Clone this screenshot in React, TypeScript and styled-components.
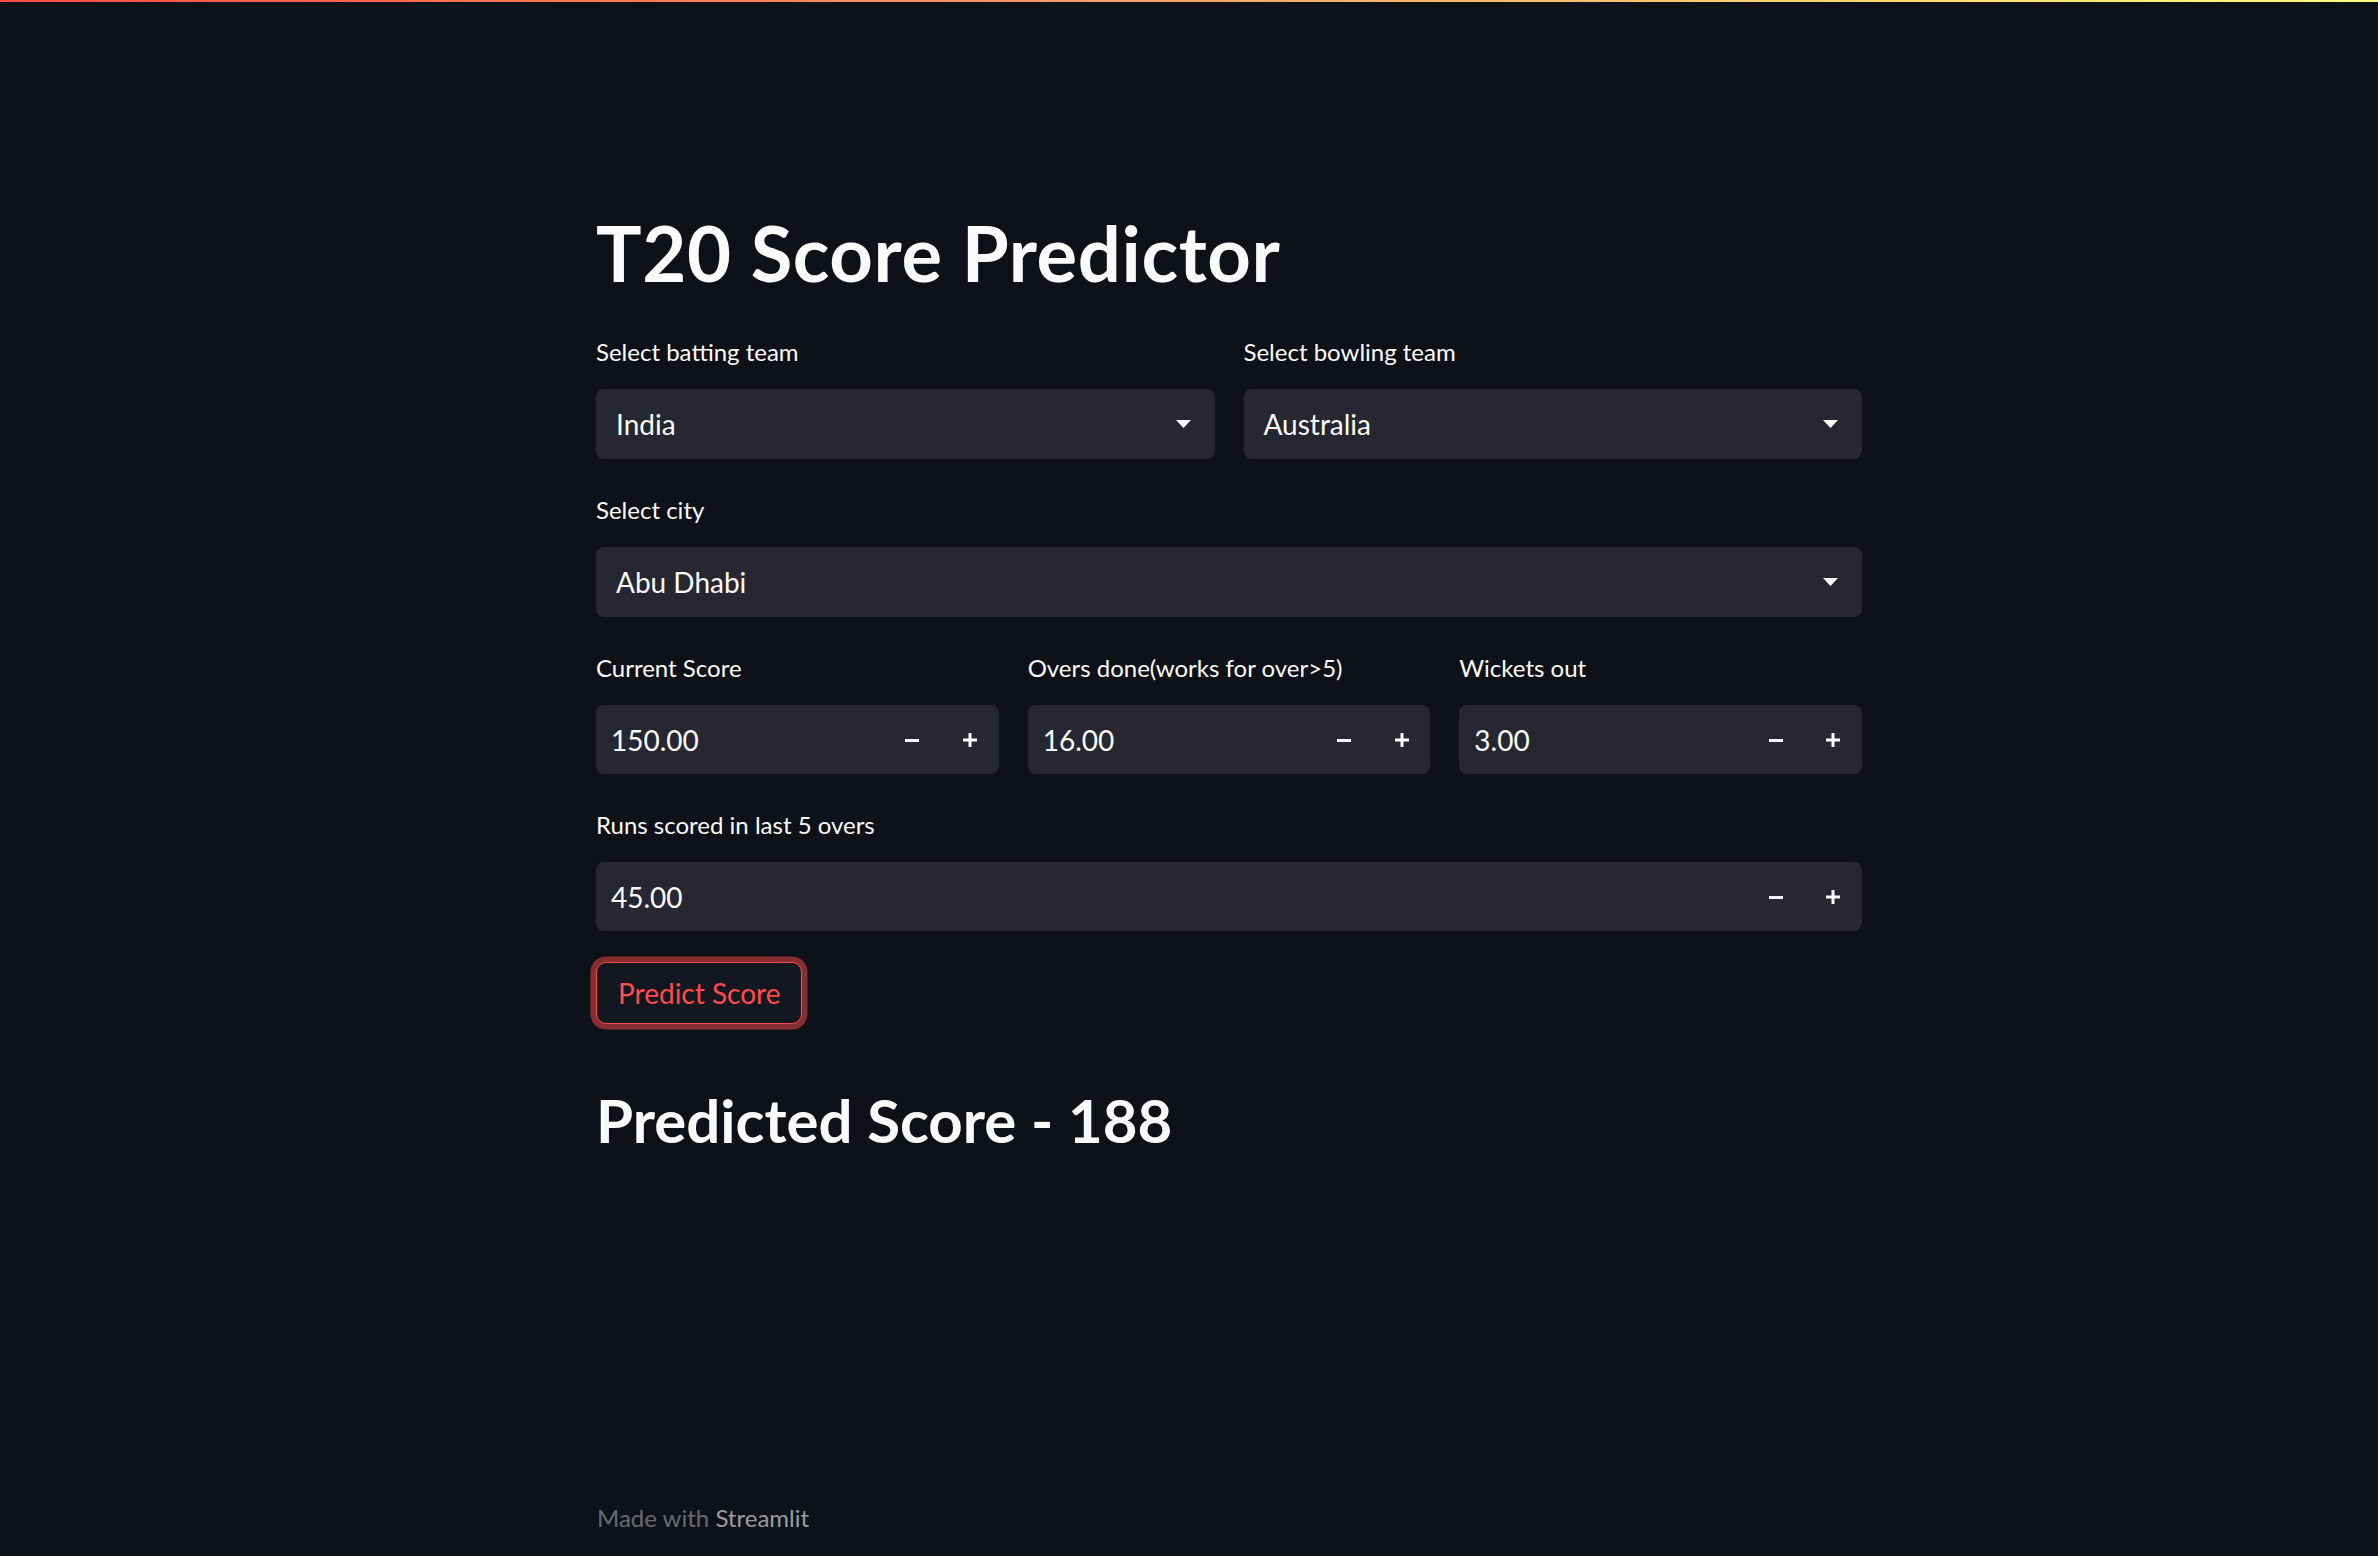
import React from "react";
import styled, { createGlobalStyle } from "styled-components";

const GlobalStyle = createGlobalStyle`
  html, body {
    margin: 0;
    padding: 0;
    background: #0e1117;
    color: #fafafa;
    font-family: Lato, "Open Sans", sans-serif;
  }
  * {
    box-sizing: border-box;
  }
`;

const battingTeam = "India";
const bowlingTeam = "Australia";
const city = "Abu Dhabi";

const App: React.FC = () => {
  return (
    <Page>
      <GlobalStyle />
      <Decoration />
      <Main>
        <Title>T20 Score Predictor</Title>

        <Form>
          <Columns $count={2}>
            <Field>
              <Label>Select batting team</Label>
              <SelectBox>
                <span>{battingTeam}</span>
                <Caret />
              </SelectBox>
            </Field>
            <Field>
              <Label>Select bowling team</Label>
              <SelectBox>
                <span>{bowlingTeam}</span>
                <Caret />
              </SelectBox>
            </Field>
          </Columns>

          <Field>
            <Label>Select city</Label>
            <SelectBox>
              <span>{city}</span>
              <Caret />
            </SelectBox>
          </Field>

          <Columns $count={3}>
            <NumberField label="Current Score" value="150.00" />
            <NumberField label="Overs done(works for over>5)" value="16.00" />
            <NumberField label="Wickets out" value="3.00" />
          </Columns>

          <NumberField label="Runs scored in last 5 overs" value="45.00" />

          <div>
            <PredictButton>Predict Score</PredictButton>
          </div>
        </Form>

        <Result>Predicted Score - 188</Result>
      </Main>

      <Footer>
        Made with <strong>Streamlit</strong>
      </Footer>
    </Page>
  );
};

export default App;

const NumberField: React.FC<{ label: string; value: string }> = ({
  label,
  value,
}) => (
  <Field>
    <Label>{label}</Label>
    <NumberBox>
      <Value>{value}</Value>
      <StepButton aria-label="decrement">
        <svg width="14" height="14" viewBox="0 0 14 14">
          <rect x="0" y="6" width="14" height="3" fill="#fafafa" />
        </svg>
      </StepButton>
      <StepButton aria-label="increment">
        <svg width="14" height="14" viewBox="0 0 14 14">
          <rect x="0" y="5.5" width="14" height="3" fill="#fafafa" />
          <rect x="5.5" y="0" width="3" height="14" fill="#fafafa" />
        </svg>
      </StepButton>
    </NumberBox>
  </Field>
);

const Caret: React.FC = () => (
  <CaretIcon width="15" height="8" viewBox="0 0 15 8">
    <polygon points="0,0 15,0 7.5,8" fill="#fafafa" />
  </CaretIcon>
);

const Page = styled.div`
  min-height: 100vh;
  display: flex;
  flex-direction: column;
`;

const Decoration = styled.div`
  position: fixed;
  top: 0;
  left: 0;
  right: 0;
  height: 2px;
  background: linear-gradient(90deg, rgb(255, 75, 75), rgb(255, 253, 128));
`;

const Main = styled.main`
  width: 1266px;
  margin-left: 596px;
  padding-top: 207px;
  display: flex;
  flex-direction: column;
`;

const Title = styled.h1`
  margin: 0;
  font-size: 76px;
  font-weight: 700;
  line-height: 1.2;
  letter-spacing: 0.6px;
  color: #fafafa;
`;

const Form = styled.div`
  margin-top: 34px;
  display: flex;
  flex-direction: column;
  gap: 31px;
`;

const Columns = styled.div<{ $count: number }>`
  display: grid;
  grid-template-columns: repeat(${(p) => p.$count}, 1fr);
  gap: 29px;
`;

const Field = styled.div`
  display: flex;
  flex-direction: column;
`;

const Label = styled.label`
  font-size: 24px;
  line-height: 40px;
  margin-bottom: 17px;
  color: #fafafa;
`;

const SelectBox = styled.div`
  height: 70px;
  display: flex;
  align-items: center;
  justify-content: space-between;
  padding: 0 24px 0 20px;
  background: #262730;
  border-radius: 8px;
  font-size: 28px;
  color: #fafafa;
`;

const CaretIcon = styled.svg`
  flex: none;
`;

const NumberBox = styled.div`
  height: 69px;
  display: flex;
  align-items: stretch;
  background: #262730;
  border-radius: 8px;
  overflow: hidden;
`;

const Value = styled.div`
  flex: 1;
  display: flex;
  align-items: center;
  padding-left: 15px;
  font-size: 28px;
  color: #fafafa;
`;

const StepButton = styled.button`
  width: 57.6px;
  border: none;
  background: transparent;
  display: flex;
  align-items: center;
  justify-content: center;
  padding: 0;
  cursor: pointer;
`;

const PredictButton = styled.button`
  height: 62px;
  padding: 0 21px;
  font-family: Lato, "Open Sans", sans-serif;
  font-size: 28px;
  color: rgb(255, 75, 75);
  background: rgb(19, 23, 32);
  border: 1.5px solid rgb(255, 75, 75);
  border-radius: 10px;
  box-shadow: 0 0 0 5.5px rgba(255, 75, 75, 0.5);
  cursor: pointer;
`;

const Result = styled.h2`
  margin: 60px 0 0;
  font-size: 60px;
  font-weight: 700;
  line-height: 1.2;
  color: #fafafa;
`;

const Footer = styled.footer`
  margin-top: auto;
  margin-left: 597px;
  padding-bottom: 18px;
  font-size: 24px;
  line-height: 40px;
  color: rgba(250, 250, 250, 0.4);

  strong {
    font-weight: 400;
    color: rgba(250, 250, 250, 0.6);
  }
`;
